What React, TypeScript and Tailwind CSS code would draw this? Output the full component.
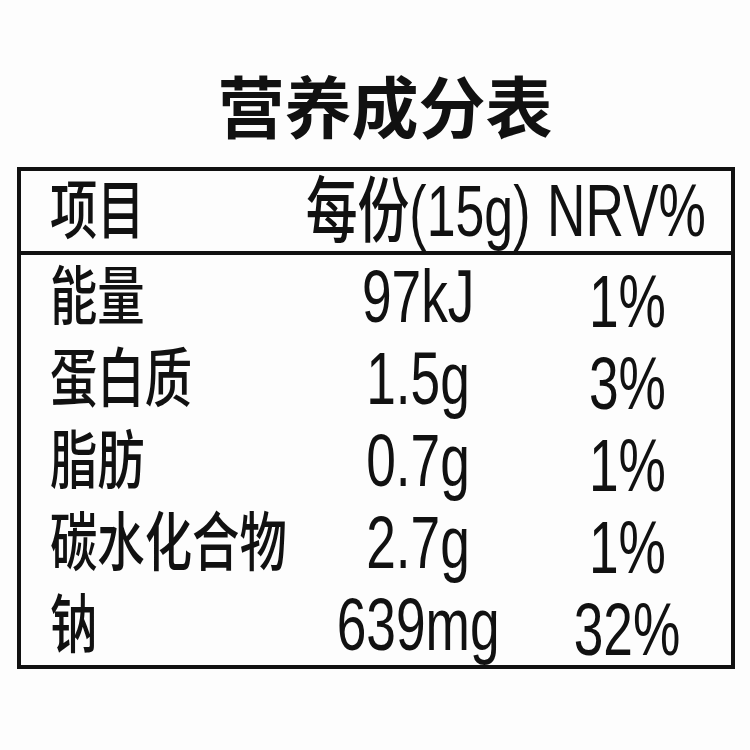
const rows = [
  { name: "能量", value: "97kJ", nrv: "1%" },
  { name: "蛋白质", value: "1.5g", nrv: "3%" },
  { name: "脂肪", value: "0.7g", nrv: "1%" },
  { name: "碳水化合物", value: "2.7g", nrv: "1%" },
  { name: "钠", value: "639mg", nrv: "32%" },
];

const cjk = "font-['Liberation_Sans','Noto_Sans_CJK_SC',sans-serif]";

function Name({ children }: { children: string }) {
  return (
    <div className="pl-[29px] flex items-center">
      <span className={`${cjk} inline-block origin-left scale-x-[0.74] text-[64px] font-medium leading-none whitespace-nowrap`}>
        {children}
      </span>
    </div>
  );
}

function Num({ children, className = "" }: { children: string; className?: string }) {
  return (
    <div className={`flex items-center justify-center ${className}`}>
      <span className="font-['Liberation_Sans',sans-serif] inline-block scale-x-[0.72] text-[74px] leading-none whitespace-nowrap">
        {children}
      </span>
    </div>
  );
}

export default function App() {
  return (
    <div className="w-[750px] h-[750px] bg-[#fdfdfd] text-[#111]">
      {/* Title */}
      <div className="h-[167px] pt-[76px] pl-[20px] text-center">
        <h1 className={`${cjk} text-[67px] font-bold leading-none`}>营养成分表</h1>
      </div>

      {/* Table */}
      <div className="ml-[17px] w-[718px] border-[4px] border-[#111]">
        <div className="h-[84px] border-b-[4px] border-[#111] grid grid-cols-[299px_196px_1fr]">
          <Name>项目</Name>
          <div className="flex items-center justify-center">
            <span className={`${cjk} inline-block scale-x-[0.72] text-[72px] font-medium leading-none whitespace-nowrap`}>
              每份(15g)
            </span>
          </div>
          <Num>NRV%</Num>
        </div>
        {rows.map((r) => (
          <div key={r.name} className="h-[82px] grid grid-cols-[299px_196px_1fr]">
            <Name>{r.name}</Name>
            <Num>{r.value}</Num>
            <Num className="pl-[8px] pt-[10px]">{r.nrv}</Num>
          </div>
        ))}
      </div>
    </div>
  );
}
